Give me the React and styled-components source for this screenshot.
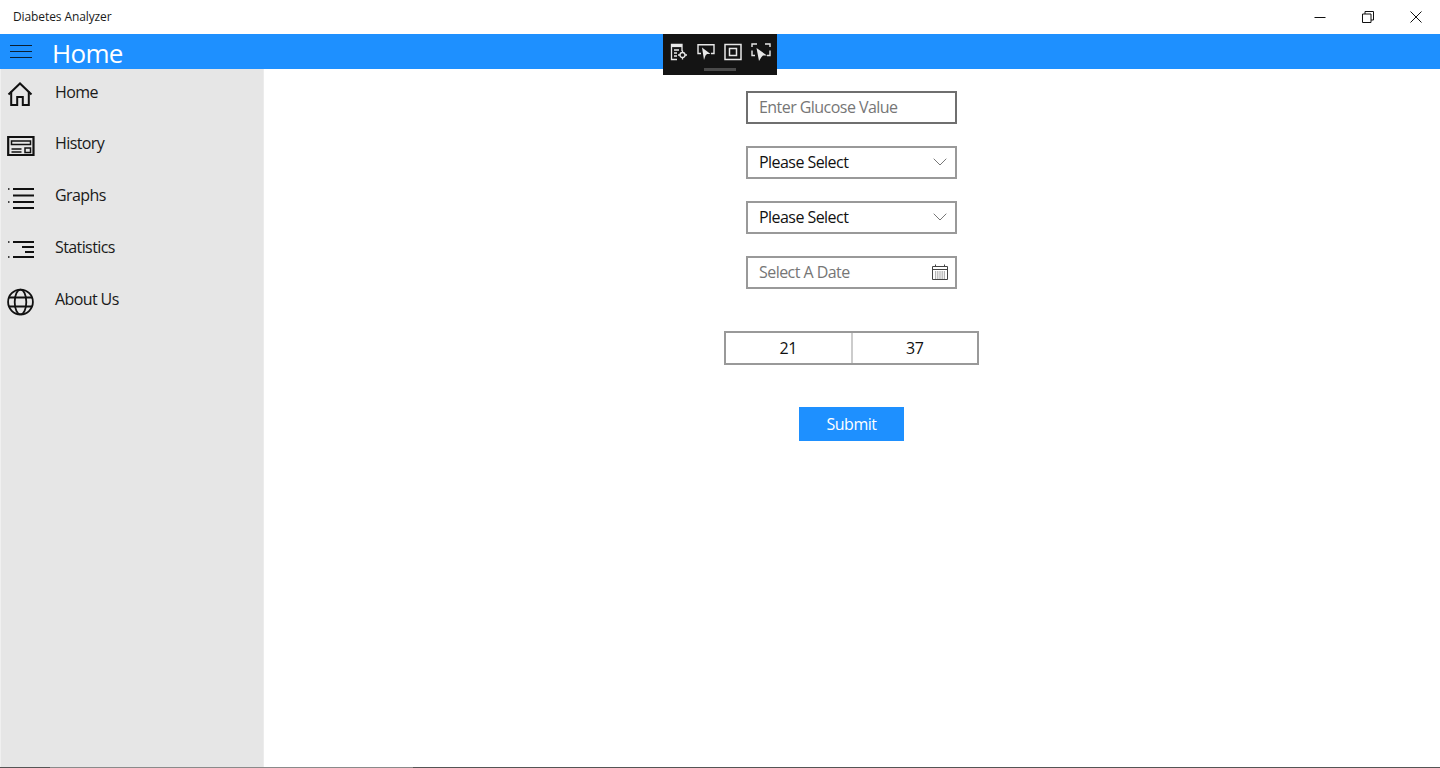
import React from "react";
import styled, { createGlobalStyle } from "styled-components";

const GlobalStyle = createGlobalStyle`
  html, body {
    margin: 0;
    padding: 0;
    height: 100%;
    overflow: hidden;
    background: #fff;
    font-family: "Open Sans", "Noto Sans", sans-serif;
  }
  #root { height: 100%; }
`;

const Page = styled.div`
  width: 1440px;
  height: 768px;
  display: flex;
  flex-direction: column;
  position: relative;
  overflow: hidden;
`;

const TitleBar = styled.div`
  height: 34px;
  display: flex;
  align-items: center;
  justify-content: space-between;
  background: #fff;
  padding-left: 13px;
  flex: none;
`;
const AppName = styled.span`
  font-size: 12px;
  letter-spacing: -0.1px;
  line-height: 16px;
  margin-top: -1px;
  color: #1a1a1a;
`;
const WinButtons = styled.div`
  display: flex;
  height: 100%;
`;
const WinButton = styled.div`
  width: 48px;
  display: flex;
  align-items: center;
  justify-content: center;
  color: #111;
`;

const HeaderBar = styled.div`
  height: 35px;
  flex: none;
  background: #1e90ff;
  display: flex;
  align-items: center;
  padding-left: 10px;
  gap: 20px;
`;
const Burger = styled.div`
  width: 22px;
  display: flex;
  flex-direction: column;
  gap: 5px;
  span {
    height: 1px;
    background: #0a1f33;
  }
`;
const PageTitle = styled.h1`
  margin: 0;
  font-size: 26px;
  font-weight: 400;
  letter-spacing: -0.7px;
  line-height: 35px;
  color: #fff;
  position: relative;
  top: 2px;
`;

const CaptureBar = styled.div`
  position: absolute;
  left: 663px;
  top: 34px;
  width: 114px;
  height: 41px;
  background: #141414;
  display: flex;
  flex-direction: column;
  align-items: center;
`;
const CaptureIcons = styled.div`
  display: flex;
  gap: 9px;
  padding-top: 9px;
  height: 18px;
  color: #e8e8e8;
`;
const CaptureHandle = styled.div`
  width: 32px;
  height: 3px;
  margin-top: 7px;
  background: #4a4a4a;
`;

const Body = styled.div`
  flex: 1;
  display: flex;
  min-height: 0;
`;
const Sidebar = styled.nav`
  width: 264px;
  flex: none;
  box-sizing: border-box;
  background: #e6e6e6;
  border-left: 1px solid #f0f0f0;
  border-right: 1px solid #ececec;
  display: flex;
  flex-direction: column;
  padding-top: 1px;
`;
const NavRow = styled.div`
  height: 51.75px;
  display: flex;
  align-items: flex-start;
  flex: none;
`;
const NavIcon = styled.div`
  width: 54px;
  padding-left: 6px;
  padding-top: 11px;
  box-sizing: border-box;
  flex: none;
  color: #111;
  svg { display: block; }
`;
const NavLabel = styled.span`
  font-size: 16px;
  letter-spacing: -0.6px;
  line-height: 22px;
  padding-top: 10.5px;
  color: #1a1a1a;
`;

const Main = styled.main`
  flex: 1;
  display: flex;
  flex-direction: column;
  align-items: center;
  padding-top: 22px;
`;
const Field = styled.div`
  width: 211px;
  height: 33px;
  box-sizing: border-box;
  border: 2px solid ${(p) => (p.$active ? "#6f6f6f" : "#999")};
  display: flex;
  align-items: center;
  justify-content: space-between;
  padding: 0 6px 1px 11px;
  margin-right: 1px;
  margin-bottom: ${(p) => p.$gap || 22}px;
  font-size: 16px;
  letter-spacing: -0.55px;
  color: ${(p) => (p.$muted ? "#767676" : "#111")};
`;
const TimePicker = styled.div`
  width: 255px;
  height: 34px;
  box-sizing: border-box;
  border: 2px solid #999;
  display: flex;
  margin-right: 1px;
  margin-bottom: 42px;
`;
const TimeCell = styled.div`
  flex: 1;
  display: flex;
  align-items: center;
  justify-content: center;
  font-size: 16px;
  letter-spacing: -0.4px;
  padding-bottom: 1px;
  color: #111;
  & + & { border-left: 2px solid #ccc; }
`;
const SubmitButton = styled.button`
  width: 105px;
  height: 34px;
  border: none;
  padding: 0 0 1px;
  margin-right: 1px;
  background: #1e90ff;
  color: #fff;
  font-family: inherit;
  font-size: 16px;
  letter-spacing: -0.5px;
`;
const BottomEdge = styled.div`
  height: 1px;
  flex: none;
  display: flex;
`;
const EdgePart = styled.div`
  width: ${(p) => p.$w || "auto"};
  flex: ${(p) => (p.$w ? "none" : 1)};
  background: ${(p) => p.$c};
`;
const ChevronSvg = styled.svg`
  margin-right: 2px;
`;

const Chevron = () => (
  <ChevronSvg width="14" height="8" viewBox="0 0 14 8" fill="none" stroke="#777" strokeWidth="1">
    <path d="M.7.7 7 7 13.3.7" />
  </ChevronSvg>
);

const CalendarIcon = () => (
  <svg width="18" height="16" viewBox="0 0 18 16" fill="none" stroke="#444" strokeWidth="1">
    <path d="M1.5 2.5h15v13h-15zM1.5 5.5h15M4.5 .5v2M13.5 .5v2" />
    <path d="M4 8h10M4 10h10M4 12h10M4 14h10" strokeDasharray="1.2 1" strokeOpacity=".8" />
  </svg>
);

const HomeIcon = () => (
  <svg width="26" height="26" viewBox="0 0 26 26" fill="none" stroke="#111" strokeWidth="2">
    <path d="M1.5 13.5 13 2.5l11.5 11" />
    <path d="M4.200 10.500V24h6v-8h5.600v8h6V10.500" />
  </svg>
);
const HistoryIcon = () => (
  <svg width="28" height="22" viewBox="0 0 28 22" fill="none" stroke="#111" strokeWidth="2" style={{ marginTop: 2 }}>
    <path d="M1.2 2h25.300v18H1.200z" strokeWidth="2.200" />
    <path d="M4.500 6h19v3.500h-19zM4.500 14h10M4.500 17h10" strokeWidth="1.500" />
    <path d="M18 13h5.500v4.500H18z" strokeWidth="1.500" />
  </svg>
);
const GraphsIcon = () => (
  <svg width="28" height="24" viewBox="0 0 28 24" fill="none" stroke="#111" strokeWidth="2" style={{ marginTop: 2 }}>
    <path d="M6 2h21M6 8.500h21M6 15h21M6 21h21" />
    <path d="M1 2h1.500M1 15h1.500" strokeWidth="1.500" />
  </svg>
);
const StatsIcon = () => (
  <svg width="28" height="24" viewBox="0 0 28 24" fill="none" stroke="#111" strokeWidth="2" style={{ marginTop: 2 }}>
    <path d="M6 4h21M15 9h12M18 14h9M6 19h21" />
    <path d="M1 4h1.500M1 19h1.500" strokeWidth="1.500" />
  </svg>
);
const GlobeIcon = () => (
  <svg width="28" height="28" viewBox="0 0 28 28" fill="none" stroke="#111" strokeWidth="1.800">
    <circle cx="13.500" cy="14" r="12.400" />
    <ellipse cx="13.500" cy="14" rx="5.800" ry="12.400" />
    <path d="M2 9.500h23M2 18.500h23" />
  </svg>
);

const navItems = [
  { label: "Home", icon: <HomeIcon /> },
  { label: "History", icon: <HistoryIcon /> },
  { label: "Graphs", icon: <GraphsIcon /> },
  { label: "Statistics", icon: <StatsIcon /> },
  { label: "About Us", icon: <GlobeIcon /> },
];

export default function App() {
  return (
    <Page>
      <GlobalStyle />
      <TitleBar>
        <AppName>Diabetes Analyzer</AppName>
        <WinButtons>
          <WinButton>
            <svg width="12" height="12" viewBox="0 0 12 12" stroke="currentColor" fill="none">
              <path d="M.5 6.500h11" />
            </svg>
          </WinButton>
          <WinButton>
            <svg width="12" height="12" viewBox="0 0 12 12" stroke="currentColor" fill="none">
              <path d="M.5 3h8.500v8.500H.5zM3 3V.5h8.500V9H9" />
            </svg>
          </WinButton>
          <WinButton>
            <svg width="12" height="12" viewBox="0 0 12 12" stroke="currentColor" fill="none">
              <path d="M.5.500l11 11M11.500.500l-11 11" />
            </svg>
          </WinButton>
        </WinButtons>
      </TitleBar>
      <HeaderBar>
        <Burger>
          <span />
          <span />
          <span />
        </Burger>
        <PageTitle>Home</PageTitle>
      </HeaderBar>
      <CaptureBar>
        <CaptureIcons>
          <svg width="18" height="18" viewBox="0 0 18 18" fill="none" stroke="currentColor" strokeWidth="1.300">
            <path d="M12 8V1.500H1.500v15H7" />
            <path d="M1.500 3h10.500" strokeWidth="2.200" />
            <path d="M4 7h5M4 10h3M4 13h3" />
            <circle cx="12.500" cy="12" r="2.500" />
            <path d="M12.500 7.500v2M12.500 14.500v2M8 12h2M15 12h2" />
          </svg>
          <svg width="18" height="18" viewBox="0 0 18 18" fill="none" stroke="currentColor" strokeWidth="1.400">
            <path d="M4 10.500H1V1.700h16v8.800h-3" />
            <path d="M5 4.500 13.500 11H10l-1.500 1.500L7 17z" fill="currentColor" stroke="none" />
          </svg>
          <svg width="18" height="18" viewBox="0 0 18 18" fill="none" stroke="currentColor" strokeWidth="1.500">
            <path d="M1 1.500h16v15H1zM5.500 5.500h7v7h-7z" />
          </svg>
          <svg width="20" height="18" viewBox="0 0 20 18" fill="none" stroke="currentColor" strokeWidth="1.400">
            <path d="M1 4V1h5M14 1h5v3M1 7.500v5h3M19 7.500v5h-3" />
            <path d="M5.500 5 16 12.500h-4L10.500 14 8 18z" fill="currentColor" stroke="none" />
          </svg>
        </CaptureIcons>
        <CaptureHandle />
      </CaptureBar>
      <Body>
        <Sidebar>
          {navItems.map((item) => (
            <NavRow key={item.label}>
              <NavIcon>{item.icon}</NavIcon>
              <NavLabel>{item.label}</NavLabel>
            </NavRow>
          ))}
        </Sidebar>
        <Main>
          <Field $active $muted>Enter Glucose Value</Field>
          <Field>
            Please Select
            <Chevron />
          </Field>
          <Field>
            Please Select
            <Chevron />
          </Field>
          <Field $muted $gap={42}>
            Select A Date
            <CalendarIcon />
          </Field>
          <TimePicker>
            <TimeCell>21</TimeCell>
            <TimeCell>37</TimeCell>
          </TimePicker>
          <SubmitButton>Submit</SubmitButton>
        </Main>
      </Body>
      <BottomEdge>
        <EdgePart $w="50px" $c="#555" />
        <EdgePart $w="363px" $c="#8a8a8a" />
        <EdgePart $c="#555" />
      </BottomEdge>
    </Page>
  );
}
